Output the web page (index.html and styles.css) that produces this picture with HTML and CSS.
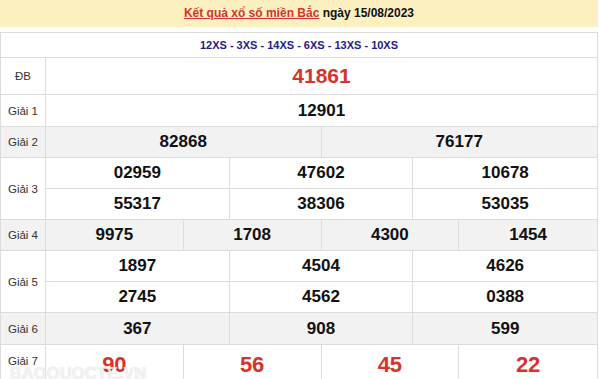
FILE: index.html
```html
<!DOCTYPE html>
<html lang="vi">
<head>
<meta charset="utf-8">
<title>Kết quả xổ số miền Bắc</title>
<link rel="stylesheet" href="styles.css">
</head>
<body>
<div class="page">
  <div class="title"><a class="title-link" href="#">Kết quả xổ số miền Bắc</a> ngày 15/08/2023</div>
  <div class="table">
    <div class="row row-code"><div class="code">12XS - 3XS - 14XS - 6XS - 13XS - 10XS</div></div>
    <div class="row row-db">
      <div class="label">ĐB</div>
      <div class="cells c1"><div class="cell num-db">41861</div></div>
    </div>
    <div class="row h32">
      <div class="label">Giải 1</div>
      <div class="cells c1"><div class="cell">12901</div></div>
    </div>
    <div class="row grey h31">
      <div class="label">Giải 2</div>
      <div class="cells c2"><div class="cell">82868</div><div class="cell">76177</div></div>
    </div>
    <div class="row h62">
      <div class="label">Giải 3</div>
      <div class="cells c3">
        <div class="cell">02959</div><div class="cell">47602</div><div class="cell">10678</div>
        <div class="cell">55317</div><div class="cell">38306</div><div class="cell">53035</div>
      </div>
    </div>
    <div class="row grey h31">
      <div class="label">Giải 4</div>
      <div class="cells c4"><div class="cell">9975</div><div class="cell">1708</div><div class="cell">4300</div><div class="cell">1454</div></div>
    </div>
    <div class="row h62">
      <div class="label">Giải 5</div>
      <div class="cells c3">
        <div class="cell">1897</div><div class="cell">4504</div><div class="cell">4626</div>
        <div class="cell">2745</div><div class="cell">4562</div><div class="cell">0388</div>
      </div>
    </div>
    <div class="row grey h32">
      <div class="label">Giải 6</div>
      <div class="cells c3"><div class="cell">367</div><div class="cell">908</div><div class="cell">599</div></div>
    </div>
    <div class="row h40">
      <div class="label label-g7">Giải 7</div>
      <div class="cells c4"><div class="cell red">90</div><div class="cell red">56</div><div class="cell red">45</div><div class="cell red">22</div></div>
    </div>
  </div>
  <div class="watermark">BAOQUOCTE.VN</div>
</div>
</body>
</html>
```
FILE: styles.css
```css
* { box-sizing: border-box; }
html, body { margin: 0; padding: 0; background: #fff; }
body { font-family: "Liberation Sans", Arial, sans-serif; color: #111; overflow: hidden; }
.page { position: relative; width: 600px; height: 379px; overflow: hidden; }
.title {
  width: 598px; height: 27px; line-height: 27px;
  background: #fcf0c1; text-align: center;
  font-size: 12px; font-weight: bold; color: #111;
  margin-bottom: 5px;
}
.title-link { color: #d4342c; text-decoration: underline; }
.table { width: 598px; border-top: 1px solid #dcdcdc; border-left: 1px solid #dcdcdc; }
.row { display: flex; border-bottom: 1px solid #dcdcdc; border-right: 1px solid #dcdcdc; background: #fff; }
.row.grey { background: #f2f2f2; }
.row-code { height: 25px; justify-content: center; align-items: center; }
.row-db { height: 37px; }
.h31 { height: 31px; }
.h32 { height: 32px; }
.h40 { height: 40px; }
.h62 { height: 62px; }
.code { font-size: 11px; font-weight: bold; color: #1c1c8a; }
.label {
  width: 45px; flex: none; border-right: 1px solid #dcdcdc;
  display: flex; align-items: center; justify-content: center;
  font-size: 11.5px; color: #333;
}
.label-g7 { align-items: flex-start; padding-top: 10px; }
.cells { flex: 1; display: grid; grid-auto-rows: 1fr; }
.c1 { grid-template-columns: 1fr; }
.c2 { grid-template-columns: repeat(2, 1fr); }
.c3 { grid-template-columns: repeat(3, 1fr); }
.c4 { grid-template-columns: repeat(4, 1fr); }
.cell {
  display: flex; align-items: center; justify-content: center;
  font-size: 17px; font-weight: bold; color: #111;
  border-right: 1px solid #dcdcdc; border-bottom: 1px solid #dcdcdc;
}
.c1 > .cell,
.c2 > .cell:nth-child(2n),
.c3 > .cell:nth-child(3n),
.c4 > .cell:nth-child(4n) { border-right: none; }
.c1 > .cell,
.c2 > .cell:nth-last-child(-n+2),
.c3 > .cell:nth-last-child(-n+3),
.c4 > .cell:nth-last-child(-n+4) { border-bottom: none; }
.num-db { font-size: 21px; color: #d8322b; }
.cell.red { font-size: 22px; color: #d8322b; align-items: flex-start; padding-top: 7px; }
.watermark {
  position: absolute; left: 10px; top: 365px;
  font-size: 16px; line-height: 17px; font-weight: bold; letter-spacing: 0.5px;
  color: rgba(255,255,255,0.75);
  text-shadow: 0 0 1px rgba(150,150,150,0.5);
}
```
